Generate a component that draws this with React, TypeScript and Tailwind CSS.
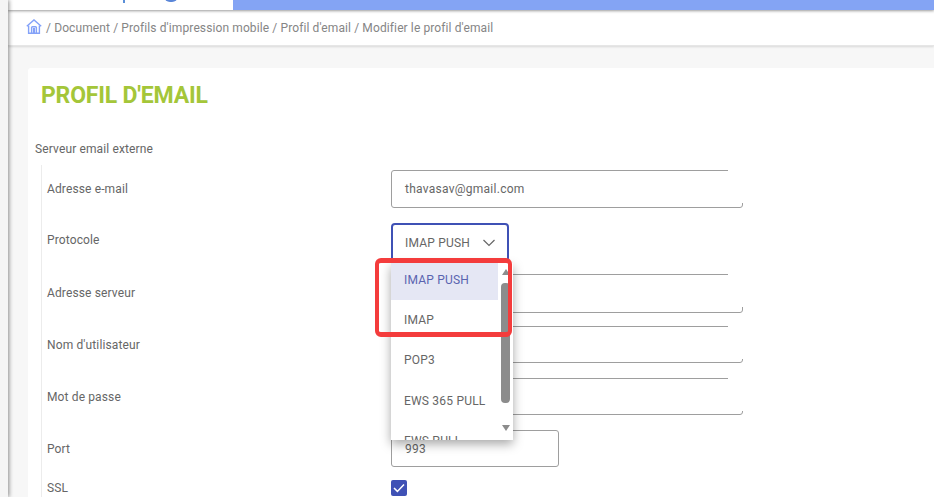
import React from 'react';

const font = { fontFamily: 'Roboto, sans-serif' };

const HomeIcon = () => (
  <svg width="16" height="15" viewBox="0 0 16 15" fill="none" stroke="#84a2f8" strokeWidth="1.4" className="shrink-0">
    <path d="M0.8 7.2 8 0.9l7.2 6.3" />
    <path d="M2.6 6.6v7.6h10.8V6.6" />
    <path d="M5.6 14V8.6c0-.6.3-.9.9-.9h3c.6 0 .9.3.9.9V14" />
    <path d="M7.6 14V9.8h.8V14" />
  </svg>
);

// input whose top line stops short of the right end, the way the page draws it
const TextField = ({ value, width = 'w-[352px]', h = 'h-[38px]', cut = true }: { value?: string; width?: string; h?: string; cut?: boolean }) => (
  <div className={`relative ${width} ${h} border border-[#9e9e9e] rounded-[3px] px-[13px] flex items-center text-[12px] tracking-[0.26px] text-[#666]`}>
    {value}
    {cut && <span className="absolute -top-px -right-px w-[15px] h-[33px] bg-white" />}
  </div>
);

const Row = ({ label, height, labelTop, children }: { label: string; height: string; labelTop: string; children: React.ReactNode }) => (
  <div className={`flex ${height}`}>
    <div className={`w-[344px] shrink-0 text-[12px] leading-[14px] tracking-[0.13px] text-[#666] ${labelTop}`}>{label}</div>
    {children}
  </div>
);

const options = ['IMAP PUSH', 'IMAP', 'POP3', 'EWS 365 PULL', 'EWS PULL'];

const ProtocolSelect = () => (
  <div className="relative">
    <div className="w-[118px] h-[39px] border-2 border-[#3f51b5] rounded-[4px] pl-[12px] pr-[11px] flex items-center justify-between text-[12px] tracking-[0.2px] text-[#666]">
      <span>IMAP PUSH</span>
      <svg width="14" height="8" viewBox="0 0 14 8" fill="none" stroke="#666" strokeWidth="1.2">
        <path d="M1.5 1 7 6.5 12.5 1" />
      </svg>
    </div>
    {/* open dropdown */}
    <div className="absolute z-10 left-0 top-[40px] w-[122px] h-[177px] bg-white overflow-hidden shadow-[0_4px_10px_rgba(0,0,0,0.35)] flex">
      <div className="w-[107px] shrink-0 tracking-[0.2px]">
        {options.map((o, i) => (
          <div key={o} className={`pl-[13px] flex items-center text-[12px] ${i === 0 ? 'bg-[#e5e7f4] text-[#5a64b0] h-[37px] pb-[3px]' : 'text-[#666] h-[40.5px] pb-[1px]'}`}>
            {o}
          </div>
        ))}
      </div>
      <div className="flex-1 flex flex-col items-center pt-[6px]">
        <span className="w-0 h-0 border-x-[4px] border-x-transparent border-b-[6px] border-b-[#8c8c8c]" />
        <span className="w-[9px] h-[120px] mt-[8px] rounded-[4px] bg-[#8c8c8c]" />
        <span className="w-0 h-0 mt-[22px] border-x-[4px] border-x-transparent border-t-[6px] border-t-[#8c8c8c]" />
      </div>
    </div>
    {/* red annotation round the first two options */}
    <div className="absolute z-20 left-[-16px] top-[35px] w-[137px] h-[79px] border-x-[4px] border-y-[5px] border-[#f43c3c] rounded-[6px]" />
  </div>
);

export default function App() {
  return (
    <div style={font} className="relative w-[934px] h-[497px] overflow-hidden flex bg-[#f7f7f7]">
      <div className="relative z-30 w-2 shrink-0 bg-[#f5f5f5] shadow-[1px_0_4px_rgba(0,0,0,0.45)]" />
      <div className="flex-1 min-w-0 flex flex-col">
        <div className="relative z-20 h-[10px] flex shrink-0 shadow-[0_1px_3px_rgba(0,0,0,0.4)]">
          <div className="relative w-[225px] bg-white overflow-hidden">
            <span className="absolute left-[115px] top-0 w-[2px] h-[3px] bg-[#5a8fd8]" />
            <span className="absolute left-[156px] -top-[10px] w-[14px] h-[12px] rounded-full bg-[#5a86d8]" />
          </div>
          <div className="flex-1 bg-[#84a4f4]" />
        </div>
        <div className="relative z-10 h-[36px] shrink-0 bg-white border-b border-[#e6e6e6] shadow-[0_1px_2px_rgba(0,0,0,0.12)] pl-[18px] flex items-center gap-[5px] text-[12px] tracking-[0.11px] text-[#858585]">
          <span className="-mt-[2px]"><HomeIcon /></span>
          <span className="-ml-[1px]">/ Document / Profils d'impression mobile / Profil d'email / Modifier le profil d'email</span>
        </div>
        <div className="flex-1 pl-[20px] pt-[22px] min-h-0">
          <div className="h-[500px] bg-white rounded-tl-[3px] pl-[7px]">
            <h1 className="pl-[6px] pt-[14px] text-[23px] leading-[28px] font-bold tracking-[-0.2px] text-[#a4c639]">PROFIL D'EMAIL</h1>
            <div className="mt-[32px] text-[12px] leading-[14px] tracking-[0.13px] text-[#666]">Serveur email externe</div>
            <div className="ml-[6px] mt-[9px] border-l border-[#ececec] pl-[5px] pt-[5px]">
              <Row label="Adresse e-mail" height="h-[53px]" labelTop="pt-[12px]">
                <TextField value="thavasav@gmail.com" />
              </Row>
              <Row label="Protocole" height="h-[51px]" labelTop="pt-[10px]">
                <ProtocolSelect />
              </Row>
              <Row label="Adresse serveur" height="h-[52px]" labelTop="pt-[12px]">
                <TextField h="h-[39px]" />
              </Row>
              <Row label="Nom d'utilisateur" height="h-[52px]" labelTop="pt-[12px]">
                <TextField h="h-[37px]" />
              </Row>
              <Row label="Mot de passe" height="h-[52px]" labelTop="pt-[12px]">
                <TextField h="h-[37px]" />
              </Row>
              <Row label="Port" height="h-[50px]" labelTop="pt-[12px]">
                <TextField value="993" width="w-[168px]" h="h-[37px]" cut={false} />
              </Row>
              <Row label="SSL" height="h-[20px]" labelTop="pt-[1px]">
                <span className="w-4 h-4 rounded-[2px] bg-[#3f51b5] flex items-center justify-center">
                  <svg width="12" height="10" viewBox="0 0 12 10" fill="none" stroke="#fff" strokeWidth="1.5">
                    <path d="M1 5l3.4 3.4L11 1.5" />
                  </svg>
                </span>
              </Row>
            </div>
          </div>
        </div>
      </div>
    </div>
  );
}
